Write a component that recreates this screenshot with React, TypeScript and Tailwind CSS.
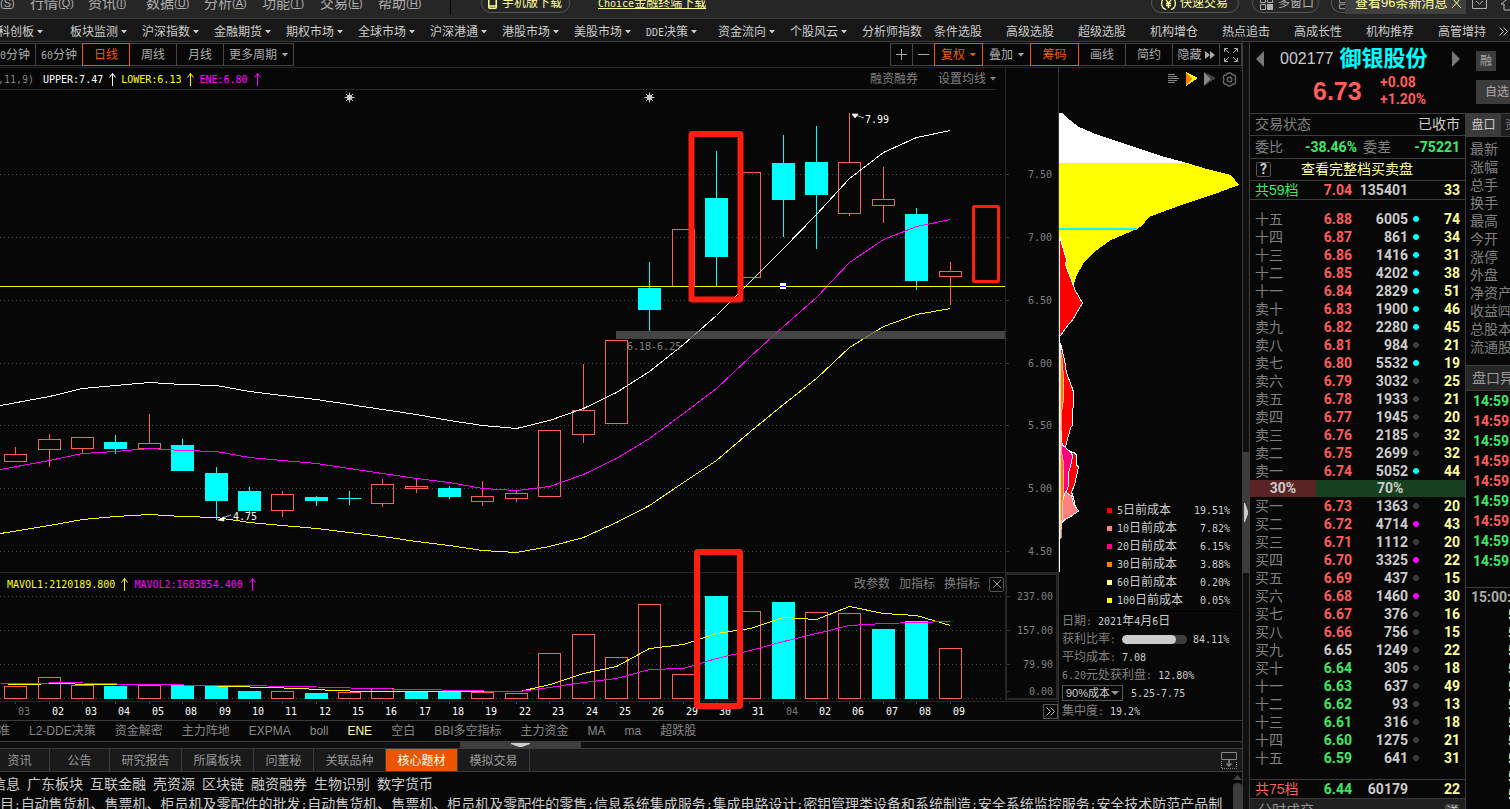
import React from 'react';

const CJK = "font-['Liberation_Sans','Noto_Sans_CJK_SC',sans-serif]";

/* Mixed Chinese / Latin string: Latin runs are set half the width of a Chinese glyph. */
function T({ s, latin = 'text-[10px]' }: { s: string; latin?: string }) {
  return (
    <span className="whitespace-nowrap">
      {s.split(/([\x20-\x7e]+)/).map((part, i) =>
        i % 2 ? (
          <span key={i} className={`font-['DejaVu_Sans_Mono',monospace] ${latin}`}>{part}</span>
        ) : (
          part
        ),
      )}
    </span>
  );
}

function Caret({ className = '' }: { className?: string }) {
  return (
    <svg width="6" height="4" viewBox="0 0 6 4" className={`shrink-0 ${className}`} fill="currentColor">
      <path d="M0 0h6L3 3.5z" />
    </svg>
  );
}

/* ---------- header ---------- */

const menus = [['行情', 'Q'], ['资讯', 'I'], ['数据', 'U'], ['分析', 'A'], ['功能', 'T'], ['交易', 'E'], ['帮助', 'H']];

function MenuBar() {
  return (
    <header className="h-[19px] shrink-0 overflow-hidden border-b border-[#3c3c3c] bg-[#262626]">
      <div className="-mt-[9px] flex h-6 items-center whitespace-nowrap text-[14px] text-[#b0b0b0]">
        <span className="w-[30px] shrink-0 text-[11px]">(<u>S</u>)</span>
        {menus.map(([name, key]) => (
          <button key={key} className="flex w-[58px] shrink-0 items-center text-left">
            {name}<span className="text-[11px]">(<u>{key}</u>)</span>
          </button>
        ))}
        <i className="ml-[14px] h-6 w-px shrink-0 bg-black" />
        <button className="ml-[30px] flex h-[20px] w-[89px] shrink-0 items-center gap-[5px] rounded-full border border-[#555] pl-[6px] text-[12px] text-[#ffff99]">
          <svg width="9" height="12" viewBox="0 0 9 12" fill="none" stroke="currentColor" strokeWidth="1.5">
            <rect x="0.75" y="0.75" width="7.5" height="10.5" rx="1" /><path d="M1 9h7" />
          </svg>
          手机版下载
        </button>
        <a href="#choice" className="ml-[28px] shrink-0 text-[12px] text-[#ffff99] underline">
          <T s="Choice金融终端下载" />
        </a>
        <div className="ml-auto flex h-6 shrink-0 items-center text-[12px]">
          <button className="flex h-[20px] w-[88px] items-center gap-1 rounded-full border border-[#555] pl-[9px] text-[12px] text-[#ffff99]">
            <svg width="15" height="15" viewBox="0 0 15 15" fill="none" stroke="currentColor" strokeWidth="1.3">
              <path d="M5 1.5A6.3 6.3 0 0 0 5 13.500M10 1.500A6.300 6.300 0 0 1 10 13.500M5 4l2.500 3L10 4M7.500 7v5M5 7.500h5M5 9.500h5" />
            </svg>
            快速交易
          </button>
          <button className="ml-[13px] flex h-[20px] w-[67px] items-center gap-[5px] rounded-full border border-[#555] pl-[7px]">
            <svg width="13" height="13" viewBox="0 0 13 13" fill="none" stroke="currentColor">
              <path d="M.5.5h5v5h-5zM7.500.5h5v5h-5zM.5 7.500h5v5h-5z" /><path d="M7 7h6v6H7z" fill="currentColor" stroke="none" />
            </svg>
            多窗口
          </button>
          <div className="ml-[12px] flex h-[20px] w-[14px] items-center rounded-l-full border border-r-0 border-[#555] pl-[7px]">
            <svg width="7" height="13" viewBox="0 0 7 13" fill="none" stroke="currentColor"><path d="M7 .5H.5v5H7M7 7.500H.5v5H7" /></svg>
          </div>
          <div className="flex h-[22px] w-[121px] items-center justify-between bg-[#3f3f3f] pl-[10px] pr-[4px] text-[13px] text-[#ffff99]">
            查看96条新消息
            <svg width="11" height="11" viewBox="0 0 11 11" stroke="currentColor"><path d="M1 0l9 10M10 0L1 10" /></svg>
          </div>
          <svg className="ml-[6px]" width="15" height="14" viewBox="0 0 15 14" fill="none" stroke="currentColor"><path d="M.5.5h14v12H.5zM4 5l3.500 3L11 5" /></svg>
          <svg className="ml-[13px]" width="10" height="15" viewBox="0 0 10 15" fill="none" stroke="currentColor"><path d="M10 1L1 8h3v6h6" /></svg>
        </div>
      </div>
    </header>
  );
}

const navItems: [string, boolean][] = [
  ['科创板', true], ['板块监测', true], ['沪深指数', true], ['金融期货', true], ['期权市场', true], ['全球市场', true],
  ['沪深港通', true], ['港股市场', true], ['美股市场', true], ['DDE决策', true], ['资金流向', true], ['个股风云', true],
  ['分析师指数', false], ['条件选股', false], ['高级选股', false], ['超级选股', false], ['机构增仓', false],
  ['热点追击', false], ['高成长性', false], ['机构推荐', false], ['高管增持', false],
];

function NavBar() {
  return (
    <nav className="relative h-[23px] shrink-0 overflow-hidden border-b border-[#3c3c3c] bg-[#171717]">
      <div className="-ml-[2px] flex h-[22px] items-center pt-[4px] text-[12px] text-[#ccc]">
        {navItems.map(([name, drop]) => (
          <a key={name} href="#nav" className="flex w-[72px] shrink-0 items-center gap-[3px] leading-[18px]">
            <T s={name} />{drop && <Caret />}
          </a>
        ))}
      </div>
      <svg className="absolute right-[2px] top-[8px] bg-[#171717]" width="9" height="9" viewBox="0 0 9 9" fill="none" stroke="#ccc">
        <path d="M.5.5l4 4-4 4M4.500.5l4 4-4 4" />
      </svg>
    </nav>
  );
}

/* ---------- toolbar ---------- */

const cell = 'flex h-[23px] shrink-0 items-center justify-center gap-[5px] whitespace-nowrap border -ml-px';
const idle = 'border-[#444] text-[#aaa]';
const hot = 'relative z-10 border-[#f25a00] text-[#f25a00]';

function Toolbar() {
  return (
    <div className="flex h-[26px] shrink-0 justify-between overflow-hidden border-b border-[#262626] pt-px text-[12px]">
      <div className="-ml-[11px] flex">
        <button className={`${cell} ${idle} w-[48px]`}><T s="30分钟" /></button>
        <button className={`${cell} ${idle} w-[48px]`}><T s="60分钟" /></button>
        <button className={`${cell} ${hot} w-[48px]`}>日线</button>
        <button className={`${cell} ${idle} w-[48px]`}>周线</button>
        <button className={`${cell} ${idle} w-[48px]`}>月线</button>
        <button className={`${cell} ${idle} w-[71px]`}>更多周期<Caret /></button>
      </div>
      <div className="flex">
        <button aria-label="放大" className={`${cell} ${idle} w-[23px]`}>
          <svg width="11" height="11" viewBox="0 0 11 11" stroke="currentColor"><path d="M0 5.500h11M5.500 0v11" /></svg>
        </button>
        <button aria-label="缩小" className={`${cell} ${idle} w-[23px]`}>
          <svg width="11" height="11" viewBox="0 0 11 11" stroke="currentColor"><path d="M0 5.500h11" /></svg>
        </button>
        <button className={`${cell} ${hot} w-[49px]`}>复权<Caret /></button>
        <button className={`${cell} ${idle} w-[49px]`}>叠加<Caret /></button>
        <button className={`${cell} ${hot} w-[49px]`}>筹码</button>
        <button className={`${cell} ${idle} w-[48px]`}>画线</button>
        <button className={`${cell} ${idle} w-[48px]`}>简约</button>
        <button className={`${cell} ${idle} w-[48px]`}>
          隐藏
          <svg className="-ml-[2px]" width="10" height="8" viewBox="0 0 10 8" fill="currentColor"><path d="M0 0l5 4-5 4zM5 0l5 4-5 4z" /></svg>
        </button>
        <button aria-label="全屏" className={`${cell} ${idle} w-[23px]`}>
          <svg width="14" height="14" viewBox="0 0 14 14" fill="none" stroke="currentColor">
            <path d="M.5 4V.5H4M.5.5l4.500 4.500M10 .5h3.500V4M13.500.5L9 5M.5 10v3.500H4M.5 13.500L5 9M10 13.500h3.500V10M13.500 13.500L9 9" />
          </svg>
        </button>
      </div>
    </div>
  );
}

/* ---------- chart data ---------- */

type Candle = { x: number; up: boolean; top: number; bot: number; hi: number; lo: number; vol: number; volUp: boolean; date: string };
const rows: [number, 0 | 1, number, number, number, number, number, 0 | 1, string][] = [
  [15, 1, 454, 461, 447, 461, 686, 1, '03'],
  [49, 1, 439, 449, 434, 467, 677, 1, '02'],
  [82, 1, 437, 448, 437, 453, 685, 1, '03'],
  [115, 0, 442, 449, 435, 454, 686, 0, '04'],
  [149, 1, 443, 448, 414, 448, 685, 1, '05'],
  [182, 0, 445, 471, 439, 471, 685, 0, '08'],
  [216, 0, 473, 501, 467, 520, 685, 0, '09'],
  [249, 0, 491, 511, 487, 513, 691, 0, '10'],
  [282, 1, 494, 510, 491, 517, 691, 1, '11'],
  [316, 0, 497, 501, 496, 506, 693, 0, '12'],
  [349, 0, 498, 499, 491, 505, 692, 1, '15'],
  [382, 1, 484, 503, 479, 507, 688, 1, '16'],
  [416, 1, 486, 488, 478, 493, 692, 0, '17'],
  [449, 0, 488, 497, 486, 499, 692, 0, '18'],
  [482, 1, 496, 501, 481, 506, 692, 1, '19'],
  [516, 1, 493, 498, 491, 502, 693, 1, '22'],
  [549, 1, 430, 496, 430, 496, 653, 1, '23'],
  [583, 1, 410, 434, 364, 443, 634, 1, '24'],
  [616, 1, 340, 423, 340, 423, 657, 1, '25'],
  [649, 0, 288, 310, 262, 331, 604, 1, '26'],
  [683, 1, 229, 286, 229, 286, 674, 1, '29'],
  [716, 0, 198, 257, 151, 286, 596, 0, '30'],
  [749, 1, 172, 277, 172, 277, 611, 1, '31'],
  [783, 0, 163, 200, 135, 237, 602, 0, '04'],
  [816, 0, 162, 195, 126, 249, 612, 1, '02'],
  [849, 1, 162, 213, 113, 216, 613, 1, '06'],
  [883, 1, 199, 205, 167, 223, 629, 0, '07'],
  [916, 0, 214, 281, 208, 290, 621, 0, '08'],
  [950, 1, 271, 276, 262, 305, 648, 1, '09'],
];
const candles: Candle[] = rows.map(([x, up, top, bot, hi, lo, vol, volUp, date]) => ({ x, up: !!up, top, bot, hi, lo, vol, volUp: !!volUp, date }));

const upper = '0,405 49,396 82,388 115,385 149,382 182,384 216,385 249,391 282,395 316,399 349,404 382,409 416,414 449,420 482,425 516,428 549,420 583,408 616,392 649,371 683,344 716,315 750,281 783,248 816,214 849,178 883,152 916,137 950,130';
const middle = '0,469 49,460 82,453 115,451 149,448 182,450 216,451 249,457 282,460 316,463 349,468 382,473 416,478 449,482 482,488 516,490 549,486 583,474 616,458 649,438 683,413 716,388 750,356 783,326 816,297 849,262 883,239 916,226 950,219';
const lower = '0,533 49,525 82,519 115,516 149,514 182,516 216,517 249,522 282,525 316,528 349,532 382,536 416,541 449,545 482,550 516,552 549,546 583,537 616,522 649,505 683,482 716,460 750,431 783,404 816,378 849,347 883,326 916,314 950,308';
const mavol1 = '7,684 32,684 49,683 66,683 82,684 166,684 200,685 233,686 266,687 300,688 333,690 366,691 500,691 519,691 550,684 583,673 616,666 649,648 683,644 716,633 750,628 783,617 816,619 849,606 883,613 916,615 950,625';
const mavol2 = '0,683 32,683 66,682 99,683 133,684 233,685 300,686 366,688 466,690 500,691 519,691 549,687 583,682 616,678 649,669 683,668 716,658 750,650 783,641 816,633 849,625 883,623 916,622 950,621';

const RED = '#ff5c5c';
const CYAN = '#00ffff';

function Lines({ points, color }: { points: string; color: string }) {
  return <polyline points={points} fill="none" stroke={color} transform="translate(.5 .5)" />;
}

function Grid({ ys, to }: { ys: number[]; to: number }) {
  return (
    <g stroke="#4a4a4a" strokeDasharray="1 3">
      {ys.map((y) => <path key={y} d={`M0 ${y + 0.5}H${to}`} />)}
    </g>
  );
}

const svgText = "font-['DejaVu_Sans_Mono',monospace] text-[10px]";

function PriceChart() {
  return (
    <svg className="min-h-0 w-full flex-1" shapeRendering="crispEdges">
      <g transform="translate(0 -90)">
        <Grid ys={[174, 237, 300, 363, 425, 488, 551]} to={1003} />
        {candles.map((c) => {
          const color = c.up ? RED : CYAN;
          return (
            <g key={c.x} fill={c.up ? 'none' : CYAN} stroke={color}>
              <path d={`M${c.x + 0.5} ${c.hi}V${c.top}M${c.x + 0.5} ${c.bot}V${c.lo}`} />
              {c.up ? (
                <rect x={c.x - 10.5} y={c.top + 0.5} width="22" height={c.bot - c.top} />
              ) : (
                <rect x={c.x - 11} y={c.top} width="23" height={c.bot - c.top} stroke="none" />
              )}
            </g>
          );
        })}
        <Lines points={upper} color="#fff" />
        <Lines points={middle} color="#f0f" />
        <Lines points={lower} color="#ff0" />
        <rect x="616" y="331" width="389" height="8" fill="#5a5a5a" opacity=".75" />
        <path d="M0 286.500H1005" stroke="#ff0" />
        <path d="M780 283h6v6h-6z" fill="#fff" /><path d="M780 286.500h6" stroke="#00f" />
        <text x="627" y="350" fill="#808080" className={svgText}>6.18-6.25</text>
        <text x="865" y="123" fill="#fff" className={svgText}>7.99</text>
        <text x="233" y="520" fill="#fff" className={svgText}>4.75</text>
        <path d="M852 114l6 0-3 4zM855 115l9 3M218 520l6-3 0 4zM222 518l9-3" fill="#fff" stroke="#fff" strokeWidth=".7" shapeRendering="auto" />
        {[349, 649].map((x) => (
          <g key={x} shapeRendering="auto" stroke="#c8c8c8">
            <path d={`M${x - 4.5} 97.500h10M${x + 0.5} 92.500v10M${x - 3} 94l7 7M${x + 4} 94l-7 7`} />
            <circle cx={x + 0.5} cy="97.500" r="2.5" fill="#c8c8c8" />
          </g>
        ))}
      </g>
    </svg>
  );
}

function VolumeChart() {
  return (
    <svg className="min-h-0 w-full flex-1" shapeRendering="crispEdges">
      <g transform="translate(0 -595)">
        <Grid ys={[596, 630, 664, 698]} to={1003} />
        {candles.map((c) =>
          c.volUp ? (
            <rect key={c.x} x={c.x - 10.5} y={c.vol + 0.5} width="22" height={698 - c.vol} fill="none" stroke={RED} />
          ) : (
            <rect key={c.x} x={c.x - 11} y={c.vol} width="23" height={699 - c.vol} fill={CYAN} />
          ),
        )}
        <Lines points={mavol1} color="#ff0" />
        <Lines points={mavol2} color="#f0f" />
      </g>
    </svg>
  );
}

function Axis({ offset, labels }: { offset: number; labels: [number, string][] }) {
  return (
    <svg className="h-full w-full" shapeRendering="crispEdges">
      <g transform={`translate(0 ${-offset})`}>
        {labels.map(([y, t]) => (
          <g key={t}>
            <path d={`M0 ${y + 0.5}h3`} stroke="#333" />
            <text x="46" y={y + 4} textAnchor="end" fill="#808080" className={svgText}>{t}</text>
          </g>
        ))}
      </g>
    </svg>
  );
}

function DateAxis() {
  return (
    <svg className="h-full min-w-0 flex-1" shapeRendering="crispEdges">
      {candles.map((c, i) => (
        <g key={c.x}>
          <path d={`M${c.x + 0.5} 0v2`} stroke="#444" />
          <text x={c.x + 9} y="13" textAnchor="middle" fill={i === 0 || i === 23 ? '#777' : '#fff'} className={svgText}>{c.date}</text>
        </g>
      ))}
    </svg>
  );
}

function Up() {
  return (
    <svg width="7" height="13" viewBox="0 0 7 13" fill="none" stroke="currentColor"><path d="M3.500 0v13M.5 4.500l3-4 3 4" /></svg>
  );
}

function Marks() {
  return (
    <svg className="pointer-events-none absolute inset-0 h-full w-full" fill="none" stroke="#ff1e12" strokeLinejoin="round">
      <g transform="translate(0 -68)">
        <rect x="691.500" y="134" width="49" height="165.500" strokeWidth="6" rx="1" />
        <rect x="697" y="552" width="43" height="154" strokeWidth="6" rx="1" />
        <rect x="973.500" y="206.500" width="25" height="75" strokeWidth="3" rx="1" />
      </g>
    </svg>
  );
}

function ChartPanel() {
  return (
    <div className="relative flex min-w-0 flex-1 flex-col overflow-hidden">
      <div className="flex h-[505px] border-b border-[#262626]">
        <div className="flex min-w-0 flex-1 flex-col">
          <div className="mr-[9px] flex h-[22px] shrink-0 items-center justify-between whitespace-nowrap border-b border-[#262626] text-[12px] text-[#808080]">
            <div className="flex items-center gap-[5px] pt-px font-['DejaVu_Sans_Mono',monospace] text-[10px]">
              <span className="-ml-[2px] w-[40px]">,11,9)</span>
              <span className="flex items-center gap-[6px] text-white">UPPER:7.47<Up /></span>
              <span className="flex items-center gap-[6px] text-[#ff0]">LOWER:6.13<Up /></span>
              <span className="flex items-center gap-[6px] text-[#f0f]">ENE:6.80<Up /></span>
            </div>
            <div className="flex items-center gap-[20px] pt-px">
              <button>融资融券</button>
              <button className="flex items-center gap-[4px]">设置均线<Caret /></button>
            </div>
          </div>
          <PriceChart />
        </div>
        <div className="w-[53px] shrink-0 border-l border-[#262626]">
          <Axis offset={68} labels={[[174, '7.50'], [237, '7.00'], [300, '6.50'], [363, '6.00'], [425, '5.50'], [488, '5.00'], [551, '4.50']]} />
        </div>
      </div>
      <div className="flex h-[129px] border-b border-[#262626]">
        <div className="flex min-w-0 flex-1 flex-col">
          <div className="flex h-[22px] shrink-0 items-center justify-between text-[12px] text-[#808080]">
            <div className="ml-[7px] flex items-center gap-[6px] font-['DejaVu_Sans_Mono',monospace] text-[10px]">
              <span className="flex items-center gap-[6px] text-[#ff0]">MAVOL1:2120189.800<Up /></span>
              <span className="flex items-center gap-[6px] text-[#f0f]">MAVOL2:1683854.400<Up /></span>
            </div>
            <div className="mr-px flex items-center gap-[9px]">
              <button>改参数</button>
              <button>加指标</button>
              <button>换指标</button>
              <button aria-label="关闭" className="flex h-[15px] w-[15px] items-center justify-center rounded-xs border border-[#555]">
                <svg width="8" height="8" viewBox="0 0 8 8" stroke="#999"><path d="M0 0l8 8M8 0L0 8" /></svg>
              </button>
            </div>
          </div>
          <VolumeChart />
        </div>
        <div className="mb-px w-[53px] shrink-0 border-2 border-[#262626]">
          <Axis offset={575} labels={[[596, '237.00'], [630, '157.00'], [664, '79.90'], [691, '0.00']]} />
        </div>
      </div>
      <div className="flex h-[18px] items-center">
        <DateAxis />
        <button aria-label="更多" className="flex h-[15px] w-[15px] items-center justify-center border border-[#555]">
          <svg width="9" height="9" viewBox="0 0 9 9" fill="none" stroke="#ccc"><path d="M.5.5l4 4-4 4M4.500.5l4 4-4 4" /></svg>
        </button>
      </div>
      <Marks />
    </div>
  );
}

/* ---------- cost distribution ---------- */

const costs = [
  { c: 'bg-[#ff0000]', n: '5日前成本', v: '19.51%' },
  { c: 'bg-[#ff8080]', n: '10日前成本', v: '7.82%' },
  { c: 'bg-[#ff0080]', n: '20日前成本', v: '6.15%' },
  { c: 'bg-[#ff8000]', n: '30日前成本', v: '3.88%' },
  { c: 'bg-[#ffff80]', n: '60日前成本', v: '0.20%' },
  { c: 'bg-[#ffff00]', n: '100日前成本', v: '0.05%' },
];

function CostShape() {
  return (
    <svg className="absolute inset-0 h-full w-full" shapeRendering="crispEdges">
      <g transform="translate(-1059 -68)">
        <path d="M1059 113h3l8 7 9 7 19 8 34 11 26 9 29 8H1059z" fill="#fff" />
        <path d="M1059 163h128l20 6 24 6 4 5 4 5-30 11-19 6-25 9-16 6-4 5-5 5-3 2-26 11-17 12-11 12-6 11-3 8 1 8-16 0z" fill="#ff0" />
        <path d="M1059 228h78v2h-78z" fill="#0ff" />
        <path d="M1059.500 236l7 24-1 5 10 26 7 12-10 17-6 7-7 10z" fill="#f00" stroke="#fff" />
        <path d="M1060.500 343l4 17 2 13 5 13 2 6-1 33-2 3-5 19 2 3 7 3 2 2v10l2 2-4 18-3 7 2 6 2 9-14 10z" fill="#f00" stroke="#fff" />
        <path d="M1060.500 437l2 8 9 8 1 3-2 11-2 5v14l-2 5-4 8-2 0z" fill="#ff0080" stroke="#fff" />
        <path d="M1060.500 505l5-13 6 4 2 8 5 7-7 5-7 4-4 4z" fill="#ff8080" stroke="#fff" />
        <path d="M1060 347l2 11 1.500 20v22l-2.500 15v35l2 10 1 20-1 20-1 20-1 18h-1z" fill="#ff8000" stroke="#fff" strokeWidth=".6" />
        <path d="M1059.500 336V572" stroke="#fff" />
      </g>
    </svg>
  );
}

function CostPanel() {
  return (
    <aside className="relative flex w-[184px] shrink-0 flex-col border-l border-[#333] text-[12px] text-[#ccc]">
      <CostShape />
      <div className="relative flex h-[22px] items-center justify-end gap-[6px] pr-[5px]">
        <svg width="12" height="12" viewBox="0 0 12 12" stroke="#888"><path d="M0 1.500h7M0 3.500h9M0 5.500h11M0 7.500h9M0 9.500h7" /></svg>
        <svg width="12" height="14" viewBox="0 0 12 14" shapeRendering="crispEdges"><path d="M0 0l12 6-12 8z" fill="#ff0" /><path d="M0 1l6 6-6 6z" fill="#ff8000" /></svg>
        <svg width="12" height="14" viewBox="0 0 12 14" shapeRendering="crispEdges"><path d="M0 0l12 6-12 8z" fill="#444" /><path d="M0 1l6 6-6 6z" fill="#888" /></svg>
        <button aria-label="设置">
          <svg width="15" height="15" viewBox="0 0 15 15" fill="none" stroke="#666" strokeWidth="1.4">
            <path d="M5.500 1.500L7.500.8l2 .7 1 1.300 2.200.4 1 2-.6 2.300.6 2.300-1 2-2.200.4-1 1.300-2 .7-2-.7-1-1.300-2.200-.4-1-2 .6-2.300-.6-2.300 1-2 2.200-.4z" /><circle cx="7.500" cy="7.500" r="2.300" />
          </svg>
        </button>
      </div>
      <ul className="relative mt-auto pb-[2px] pl-[48px] pr-[12px]">
        {costs.map((k) => (
          <li key={k.n} className="flex h-[18px] items-center">
            <i className={`mr-[5px] h-[5px] w-[5px] ${k.c}`} />
            <T s={k.n} />
            <span className="ml-auto"><T s={k.v} /></span>
          </li>
        ))}
      </ul>
      <dl className="relative mr-[3px] h-[109px] border-t border-black pl-[3px] text-[#808080]">
        <div className="flex h-[18px] items-center gap-[6px]"><dt><T s="日期:" /></dt><dd className="text-[#ccc]"><T s="2021年4月6日" /></dd></div>
        <div className="flex h-[18px] items-center gap-[6px]">
          <dt><T s="获利比率:" /></dt>
          <dd className="flex items-center gap-[6px] text-[#ccc]">
            <span className="flex h-[9px] w-[65px] overflow-hidden rounded-full bg-[#3d3d3d]"><i className="h-full w-[54px] rounded-full bg-[#ccc]" /></span>
            <T s="84.11%" />
          </dd>
        </div>
        <div className="flex h-[18px] items-center gap-[6px]"><dt><T s="平均成本:" /></dt><dd className="text-[#ccc]"><T s="7.08" /></dd></div>
        <div className="flex h-[18px] items-center gap-[6px]"><dt><T s="6.20元处获利盘:" /></dt><dd className="text-[#ccc]"><T s="12.80%" /></dd></div>
        <div className="flex h-[18px] items-center gap-[8px]">
          <dt className="relative flex items-center">
            <select aria-label="成本区间" className="h-[16px] w-[61px] appearance-none border border-[#555] bg-[#070707] pl-[3px] text-[11px] leading-[14px] text-[#ccc]">
              <option>90%成本</option>
            </select>
            <svg width="8" height="4" viewBox="0 0 8 4" fill="#999" className="pointer-events-none absolute right-[4px]"><path d="M0 0h8L4 4z" /></svg>
          </dt>
          <dd className="text-[#ccc]"><T s="5.25-7.75" /></dd>
        </div>
        <div className="flex h-[18px] items-center gap-[6px]"><dt><T s="集中度:" /></dt><dd className="text-[#ccc]"><T s="19.2%" /></dd></div>
      </dl>
    </aside>
  );
}

/* ---------- bottom area ---------- */

const indicators = ['L2-DDE决策', '资金解密', '主力阵地', 'EXPMA', 'boll', 'ENE', '空白', 'BBI多空指标', '主力资金', 'MA', 'ma', '超跌股'];
const tabs = ['资讯', '公告', '研究报告', '所属板块', '问董秘', '关联品种', '核心题材', '模拟交易'];
const topics = ['信息', '广东板块', '互联金融', '壳资源', '区块链', '融资融券', '生物识别', '数字货币'];

function Bottom() {
  return (
    <>
      <div className="flex h-[21px] shrink-0 items-center gap-[19px] overflow-hidden whitespace-nowrap border-b border-[#3c3c3c] text-[12px] text-[#888]">
        <button className="-ml-[2px]">准</button>
        {indicators.map((n) => <button key={n} className={n === 'ENE' ? 'text-[#ffff99]' : ''}>{n}</button>)}
      </div>
      <div className="h-[7px] shrink-0 border-b border-[#3c3c3c] bg-[#101010]">
        <div className="ml-[460px] flex h-[6px] w-[121px] items-center justify-center bg-[#3d3d3d]">
          <svg width="19" height="4" viewBox="0 0 19 4" fill="#ccc"><path d="M0 0h19v1L11 4H8L0 1z" /></svg>
        </div>
      </div>
      <div className="flex h-[23px] shrink-0 items-center justify-between overflow-hidden border-b border-[#3c3c3c] bg-[#1a1a1a] text-[12px]">
        <div className="-ml-[10px] flex h-[22px]">
          {tabs.map((n) => (
            <button
              key={n}
              className={`flex min-w-[60px] items-center justify-center whitespace-nowrap border-r border-[#3c3c3c] pt-px ${n.length > 3 ? 'w-[72px]' : 'w-[60px]'} ${n === '核心题材' ? 'bg-[#eb5500] text-white' : 'text-[#999]'}`}
            >
              {n}
            </button>
          ))}
        </div>
        <svg className="mr-[5px]" width="16" height="17" viewBox="0 0 16 17" fill="none" stroke="#888">
          <path d="M.5.5h15v7H.5z" /><path d="M.5 9v7.500h15V9" strokeDasharray="1 1" /><path d="M8 8v6M5.500 11.500L8 14l2.500-2.500" strokeWidth="1.300" />
        </svg>
      </div>
      <div className="flex min-h-0 flex-1 overflow-hidden text-[14px] text-[#ccc]">
        <div className="min-w-0 flex-1 overflow-hidden whitespace-nowrap pt-[2px] leading-[20px]">
          <p className="-ml-[8px] flex gap-[7px]">{topics.map((t) => <span key={t}>{t}</span>)}</p>
          <p>
            <T latin="text-[11px]" s="目:自动售货机、售票机、柜员机及零配件的批发;自动售货机、售票机、柜员机及零配件的零售;信息系统集成服务;集成电路设计;密钥管理类设备和系统制造;安全系统监控服务;安全技术防范产品制" />
          </p>
        </div>
        <div className="flex w-[9px] shrink-0 flex-col items-center pt-[3px]">
          <svg width="9" height="5" viewBox="0 0 9 5" fill="#444"><path d="M4.500 0L9 5H0z" /></svg>
          <i className="mt-[3px] w-[9px] flex-1 rounded-t bg-[#3d3d3d]" />
        </div>
      </div>
    </>
  );
}

/* ---------- quote panel ---------- */

type Level = [string, string, string, string, string];
const sells: Level[] = [
  ['十五', '6.88', '6005', 'c', '74'], ['十四', '6.87', '861', 'c', '34'], ['十三', '6.86', '1416', 'c', '31'],
  ['十二', '6.85', '4202', 'c', '38'], ['十一', '6.84', '2829', 'c', '51'], ['卖十', '6.83', '1900', 'c', '46'],
  ['卖九', '6.82', '2280', 'c', '45'], ['卖八', '6.81', '984', 'g', '21'], ['卖七', '6.80', '5532', 'c', '19'],
  ['卖六', '6.79', '3032', 'g', '25'], ['卖五', '6.78', '1933', 'g', '21'], ['卖四', '6.77', '1945', 'g', '20'],
  ['卖三', '6.76', '2185', 'g', '32'], ['卖二', '6.75', '2699', 'g', '32'], ['卖一', '6.74', '5052', 'c', '44'],
];
const buys: Level[] = [
  ['买一', '6.73', '1363', 'g', '20'], ['买二', '6.72', '4714', 'm', '43'], ['买三', '6.71', '1112', 'g', '20'],
  ['买四', '6.70', '3325', 'm', '22'], ['买五', '6.69', '437', 'g', '15'], ['买六', '6.68', '1460', 'm', '30'],
  ['买七', '6.67', '376', 'g', '16'], ['买八', '6.66', '756', 'g', '15'], ['买九', '6.65', '1249', 'g', '22'],
  ['买十', '6.64', '305', 'g', '18'], ['十一', '6.63', '637', 'g', '49'], ['十二', '6.62', '93', 'g', '13'],
  ['十三', '6.61', '316', 'g', '18'], ['十四', '6.60', '1275', 'g', '21'], ['十五', '6.59', '641', 'g', '31'],
];
const num = "font-['Roboto','Liberation_Sans',sans-serif] font-bold text-[14px]";
const dot: Record<string, string> = { c: '#00ffff', m: '#ff00ff', g: '#3d3d3d' };
const tone = (p: string) => (Number(p) > 6.65 ? 'text-[#ff5c5c]' : Number(p) === 6.65 ? 'text-[#ccc]' : 'text-[#3ee867]');

function Levels({ data, labelClass = 'text-[#808080]' }: { data: Level[]; labelClass?: string }) {
  return (
    <table className="w-full table-fixed border-collapse leading-[18px]">
      <colgroup><col className="w-[50px]" /><col className="w-[52px]" /><col className="w-[56px]" /><col className="w-[16px]" /><col /></colgroup>
      <tbody>
        {data.map(([label, price, vol, d, n]) => (
          <tr key={label} className="h-[18px]">
            <th scope="row" className={`whitespace-nowrap p-0 pl-[5px] text-left text-[14px] font-normal ${labelClass}`}>{label}</th>
            <td className={`p-0 text-right ${num} ${tone(price)}`}>{price}</td>
            <td className={`p-0 text-right text-[#ccc] ${num}`}>{vol}</td>
            <td className="p-0">
              {d && <svg className="mx-auto" width="6" height="6" viewBox="0 0 6 6" fill={dot[d]}><path d="M2 0h2l2 2v2L4 6H2L0 4V2z" /></svg>}
            </td>
            <td className={`p-0 pr-[5px] text-right text-[#ffff99] ${num}`}>{n}</td>
          </tr>
        ))}
      </tbody>
    </table>
  );
}

const stats = ['最新', '涨幅', '总手', '换手', '最高', '今开', '涨停', '外盘', '净资产', '收益㈣', '总股本', '流通股'];
const alerts = ['g', 'r', 'g', 'r', 'r', 'g', 'r', 'g', 'g'];

function QuotePanel() {
  return (
    <div className="flex w-[261px] shrink-0 flex-col border-l border-[#3c3c3c]">
      <div className="flex h-[72px] shrink-0 border-b border-[#3c3c3c]">
        <div className="w-[226px] shrink-0">
          <div className="flex h-[34px] items-center pl-[6px]">
            <svg width="8" height="16" viewBox="0 0 8 16" fill="#777"><path d="M8 0v16L0 8z" /></svg>
            <span className="ml-[16px] font-['Liberation_Sans',sans-serif] text-[16px] text-[#ccc]">002177</span>
            <h1 className="ml-[6px] w-[88px] whitespace-nowrap text-[22px] font-bold leading-[30px] text-[#0ff]">御银股份</h1>
            <svg className="ml-[25px]" width="8" height="16" viewBox="0 0 8 16" fill="#777"><path d="M0 0v16l8-8z" /></svg>
          </div>
          <div className="-mt-[2px] flex items-center pl-[63px] text-[#ff5c5c]">
            <strong className="w-[67px] font-['Liberation_Sans',sans-serif] text-[25px] leading-[28px]">6.73</strong>
            <div className={`${num} leading-[17px]`}><div>+0.08</div><div>+1.20%</div></div>
          </div>
        </div>
        <div className="w-[34px] shrink-0 overflow-hidden pt-[9px] text-[14px] text-[#aaa]">
          <button className="block h-[20px] w-[20px] bg-[#3b3b3b] text-center text-[12px] leading-[20px]">融</button>
          <button className="mt-[9px] block h-[24px] w-[48px] whitespace-nowrap bg-[#3b3b3b] pl-[9px] text-left text-[12px] leading-[24px]">自选</button>
        </div>
      </div>
      <div className="flex min-h-0 flex-1">
        <section className="flex w-[215px] shrink-0 flex-col overflow-hidden text-[14px] text-[#808080]">
          <div className="flex h-[22px] shrink-0 items-center justify-between border-b border-[#3c3c3c] pl-[5px] pr-[5px]">交易状态<span className="text-[#ccc]">已收市</span></div>
          <div className="flex h-[23px] shrink-0 items-center border-b border-[#3c3c3c] pl-[5px] pr-[5px]">
            委比
            <span className={`w-[74px] text-right text-[#3ee867] ${num}`}>-38.46%</span>
            <span className="ml-[6px]">委差</span>
            <span className={`ml-auto text-[#3ee867] ${num}`}>-75221</span>
          </div>
          <div className="flex h-[22px] shrink-0 items-center border-b border-[#3c3c3c] pl-[6px]">
            <button className={`h-[15px] w-[15px] rounded-xs border border-[#555] leading-[13px] text-[#ccc] ${num}`}>?</button>
            <a href="#full" className="ml-[30px] text-[#ffff99]">查看完整档买卖盘</a>
          </div>
          <div className="h-[19px] shrink-0 border-b border-[#3c3c3c]">
            <Levels labelClass="text-[#3ee867]" data={[['共59档', '7.04', '135401', '', '33']]} />
          </div>
          <div className="mt-[10px] shrink-0"><Levels data={sells} /></div>
          <div className={`flex h-[17px] shrink-0 text-center leading-[17px] text-[#ccc] ${num}`}>
            <div className="w-[66px] bg-[#5a2424]">30%</div>
            <div className="flex-1 bg-[#164020] pl-[75px] text-left"><span className="-ml-[14px]">70%</span></div>
          </div>
          <div className="shrink-0"><Levels data={buys} /></div>
          <div className="mt-[12px] h-[20px] shrink-0 border-y border-[#3c3c3c]">
            <Levels labelClass="text-[#ff5c5c]" data={[['共75档', '6.44', '60179', '', '22']]} />
          </div>
          <div className="flex min-h-[10px] flex-1 items-start justify-between overflow-hidden bg-[#1f1f1f] pl-[8px] pr-[6px] pt-[3px] leading-[16px] text-[#999]">
            分时成交<button className="mt-[2px] h-[16px] rounded-xs bg-[#444] px-px text-[12px] leading-[14px] text-[#ccc]">详</button>
          </div>
        </section>
        <section className="flex w-[45px] shrink-0 flex-col overflow-hidden whitespace-nowrap border-l border-[#3c3c3c] text-[14px] text-[#808080]">
          <div className="flex h-[23px] shrink-0 border-b border-[#3c3c3c] text-[12px] leading-[22px]">
            <button className="w-[35px] shrink-0 bg-[#3b3b3b] text-[#ccc]">盘口</button>
            <button className="shrink-0 bg-[#1f1f1f] pl-[4px]">资金</button>
          </div>
          <ul className="h-[229px] shrink-0 border-b border-[#3c3c3c] pl-[4px] pt-[3px]">
            {stats.map((s) => <li key={s} className="h-[18px] leading-[18px]">{s}</li>)}
          </ul>
          <h2 className="h-[25px] shrink-0 border-b border-[#3c3c3c] bg-[#262626] pl-[6px] leading-[24px] text-[#999]">盘口异动</h2>
          <ul className="h-[197px] shrink-0 border-b border-[#3c3c3c]">
            {alerts.map((a, i) => (
              <li key={i} className={`h-[20px] pl-[7px] leading-[20px] ${num} ${a === 'g' ? 'text-[#3ee867]' : 'text-[#ff5c5c]'}`}>14:59</li>
            ))}
          </ul>
          <div className={`h-[18px] shrink-0 pl-[5px] leading-[18px] text-[#aaa] ${num}`}>15:00:00</div>
          {[...Array(11)].map((_, i) => (
            <div key={i} className={`h-[18px] shrink-0 pl-[42px] leading-[18px] text-[#ffff99] ${num}`}>5</div>
          ))}
        </section>
      </div>
    </div>
  );
}

export default function App() {
  return (
    <div className={`flex h-screen flex-col overflow-hidden bg-[#070707] ${CJK}`}>
      <MenuBar />
      <NavBar />
      <main className="flex min-h-0 flex-1">
        <div className="flex min-w-0 flex-1 flex-col border-r border-[#3c3c3c]">
          <Toolbar />
          <div className="flex h-[653px] shrink-0 border-b border-[#3c3c3c]">
            <ChartPanel />
            <CostPanel />
          </div>
          <Bottom />
        </div>
        <div className="flex w-[6px] shrink-0 flex-col bg-[#101010] pt-[410px]">
          <div className="flex h-[121px] items-center bg-[#3d3d3d]">
            <svg width="5" height="19" viewBox="0 0 5 19" fill="#ccc"><path d="M1 0h1l3 8v3l-3 8H1z" /></svg>
          </div>
        </div>
        <QuotePanel />
      </main>
    </div>
  );
}
